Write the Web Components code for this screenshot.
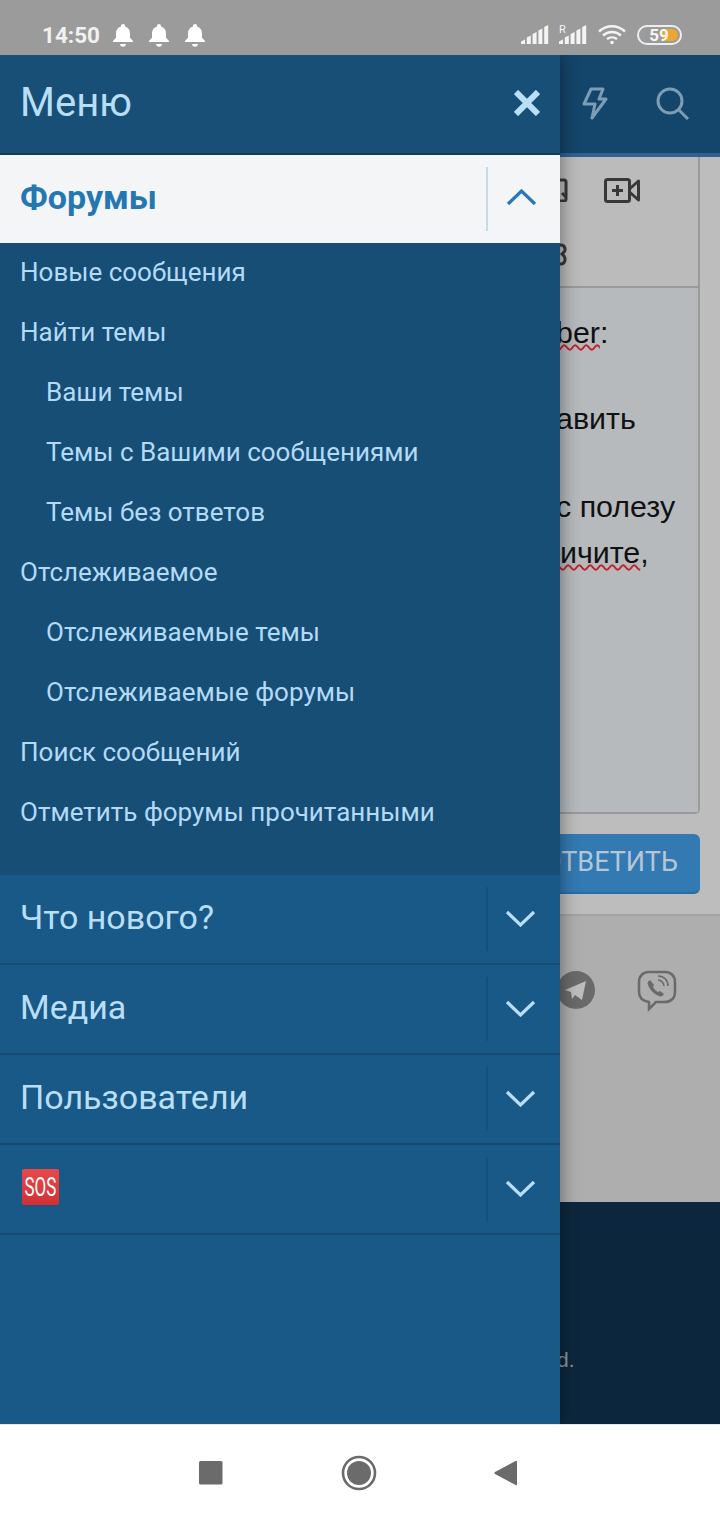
<!DOCTYPE html>
<html lang="ru">
<head>
<meta charset="utf-8">
<title>Меню</title>
<style>
  html, body { margin: 0; height: 100%; }
  body {
    width: 720px;
    height: 1520px;
    overflow: hidden;
    display: flex;
    flex-direction: column;
    font-family: Roboto, "Liberation Sans", sans-serif;
  }
  .stage { position: relative; flex: 1; min-height: 0; overflow: hidden; }
</style>
</head>
<body>
<status-bar></status-bar>
<div class="stage">
  <page-behind></page-behind>
  <app-drawer>
    <drawer-section label="Форумы" open>
      <drawer-link>Новые сообщения</drawer-link>
      <drawer-link>Найти темы</drawer-link>
      <drawer-link sub>Ваши темы</drawer-link>
      <drawer-link sub>Темы с Вашими сообщениями</drawer-link>
      <drawer-link sub>Темы без ответов</drawer-link>
      <drawer-link>Отслеживаемое</drawer-link>
      <drawer-link sub>Отслеживаемые темы</drawer-link>
      <drawer-link sub>Отслеживаемые форумы</drawer-link>
      <drawer-link>Поиск сообщений</drawer-link>
      <drawer-link>Отметить форумы прочитанными</drawer-link>
    </drawer-section>
    <drawer-section label="Что нового?"></drawer-section>
    <drawer-section label="Медиа"></drawer-section>
    <drawer-section label="Пользователи"></drawer-section>
    <drawer-section sos></drawer-section>
  </app-drawer>
</div>
<nav-bar></nav-bar>

<script>
const bell = `<svg width="22" height="24" viewBox="0 0 22 24"><path fill="#fff" d="M11 1c1.200 0 2 .8 2 2v.6c3.300.9 5 3.500 5 7v4.200l3 3.200v1H1v-1l3-3.200v-4.200c0-3.500 1.700-6.100 5-7V3c0-1.200.8-2 2-2z"/><path fill="#fff" d="M8 21h6c0 1.600-1.300 2.700-3 2.700S8 22.600 8 21z"/></svg>`;

const bars = `<path d="M0 19v-2.500l4-2V19zM5.800 19v-6.500l4-2V19zM11.600 19V9l4-2v12zM17.400 19V5.500l4-2V19zM23.200 19V2l4-2v19z" fill="#f4f4f4"/>`;

class StatusBar extends HTMLElement {
  constructor() {
    super();
    this.attachShadow({ mode: "open" });
    this.shadowRoot.innerHTML = `
      <style>
        :host {
          display: flex;
          flex: none;
          height: 55px;
          box-sizing: border-box;
          padding: 14px 38px 0 42px;
          align-items: center;
          background: #9b9b9b;
          color: #f1f1f1;
        }
        .time { font: 700 22.500px Roboto, sans-serif; width: 70px; }
        .bells { display: flex; gap: 14px; }
        .right { margin-left: auto; display: flex; align-items: center; }
        svg { display: block; }
        .sim2 { margin-left: 10px; margin-top: -1px; }
        .wifi { margin-left: 11px; }
        .battery {
          margin-left: 11px;
          width: 45px;
          height: 20px;
          box-sizing: border-box;
          border: 2px solid #eee;
          border-radius: 10px;
          padding: 2px;
          position: relative;
        }
        .fill { height: 100%; margin-left: 21px; background: #efa62e; border-radius: 0 7px 7px 0; }
        .pct {
          position: absolute;
          inset: 0 1px 0 0;
          text-align: center;
          font: 700 17px/16px Roboto, sans-serif;
          color: #f6f6f6;
        }
      </style>
      <div class="time">14:50</div>
      <div class="bells">${bell}${bell}${bell}</div>
      <div class="right">
        <svg width="28" height="19" viewBox="0 0 28 19">${bars}</svg>
        <svg class="sim2" width="28" height="20" viewBox="0 0 28 20">
          <text x="0" y="9" font-family="Roboto" font-size="11" fill="#f4f4f4">R</text>
          <g transform="translate(0 1)">${bars}</g>
        </svg>
        <svg class="wifi" width="28" height="20" viewBox="0 0 28 20" fill="none" stroke="#f4f4f4" stroke-width="2.400">
          <path d="M1 6.500C8.500-.5 19.500-.5 27 6.500"/>
          <path d="M5 10.500c5.300-4.700 12.700-4.700 18 0"/>
          <path d="M9 14.200c3-2.500 7-2.500 10 0"/>
          <circle cx="14" cy="17.500" r="1.800" fill="#f4f4f4" stroke="none"/>
        </svg>
        <div class="battery"><div class="fill"></div><div class="pct">59</div></div>
      </div>
    `;
  }
}
customElements.define("status-bar", StatusBar);

class NavBar extends HTMLElement {
  constructor() {
    super();
    this.attachShadow({ mode: "open" });
    this.shadowRoot.innerHTML = `
      <style>
        :host {
          display: flex;
          flex: none;
          height: 96px;
          box-sizing: border-box;
          border-top: 1px solid #dfe8ef;
          background: #fff;
          padding: 0 202px 0 199px;
          justify-content: space-between;
          align-items: center;
        }
        svg { display: block; }
      </style>
      <svg width="24" height="24" viewBox="0 0 24 24"><rect x="0" y="0" width="23.500" height="23.500" rx="1.500" fill="#6b6b6b"/></svg>
      <svg width="36" height="36" viewBox="0 0 36 36"><circle cx="18" cy="18" r="16" fill="none" stroke="#6b6b6b" stroke-width="2.600"/><circle cx="18" cy="18" r="12" fill="#6b6b6b"/></svg>
      <svg width="24" height="26" viewBox="0 0 24 26"><path d="M23 1.500v23c0 .8-.8 1-1.300.6L1 14c-.8-.5-.8-1.500 0-2L21.700.9c.5-.4 1.300-.2 1.300.6z" fill="#6b6b6b"/></svg>
    `;
  }
}
customElements.define("nav-bar", NavBar);

class AppDrawer extends HTMLElement {
  constructor() {
    super();
    this.attachShadow({ mode: "open" });
    this.shadowRoot.innerHTML = `
      <style>
        :host {
          position: absolute;
          left: 0;
          top: 0;
          bottom: 0;
          width: 560px;
          display: flex;
          flex-direction: column;
          background: #195987;
          box-shadow: 0 0 18px rgba(0, 0, 0, .45);
        }
        header {
          flex: none;
          height: 100px;
          box-sizing: border-box;
          padding: 0 20px 3px;
          display: flex;
          align-items: center;
          justify-content: space-between;
          background: #184f77;
          color: #b9def8;
          font-size: 40px;
          border-bottom: 2px solid #123a59;
        }
        svg { display: block; }
      </style>
      <header>
        <span>Меню</span>
        <svg width="26" height="26" viewBox="0 0 26 26" fill="none" stroke="#b9def8" stroke-width="6"><path d="M2 2l22 22M24 2L2 24"/></svg>
      </header>
      <slot></slot>
    `;
  }
}
customElements.define("app-drawer", AppDrawer);

class DrawerSection extends HTMLElement {
  constructor() {
    super();
    this.attachShadow({ mode: "open" });
    const open = this.hasAttribute("open");
    const title = this.hasAttribute("sos")
      ? `<span class="sos"><span>SOS</span></span>`
      : this.getAttribute("label");
    const chevron = open ? "M2 15L15.500 2 29 15" : "M2 2l13.500 13L29 2";
    this.shadowRoot.innerHTML = `
      <style>
        :host { display: block; flex: none; }
        .row {
          display: flex;
          align-items: center;
          height: 88px;
          padding-left: 20px;
          color: #b9def8;
          font-size: 34px;
          border-bottom: 2px solid #174a72;
        }
        :host([open]) .row {
          background: #f4f5f6;
          color: #2577b1;
          font-weight: 700;
          border-bottom: 0;
        }
        .title { flex: 1; padding-bottom: 5px; }
        .toggle {
          width: 74px;
          height: 64px;
          border-left: 2px solid #174f7b;
          display: flex;
          align-items: center;
          justify-content: center;
          padding-right: 8px;
          box-sizing: border-box;
        }
        .toggle svg { margin-top: -2px; }
        :host([open]) .toggle { border-left-color: #c6d9e7; padding-right: 6px; }
        :host([open]) .toggle svg { margin-top: -3px; }
        .list {
          display: none;
          background: #174e76;
          padding-bottom: 32px;
        }
        :host([open]) .list { display: block; }
        svg { display: block; }
        .sos {
          display: flex;
          align-items: center;
          justify-content: center;
          width: 37px;
          height: 36px;
          margin: 1px 0 0 2px;
          border-radius: 2px;
          background: linear-gradient(#e9494c, #d33034);
          color: #fff;
          font-size: 25px;
          font-weight: 400;
        }
        .sos span { transform: scaleX(.68); }
      </style>
      <div class="row">
        <div class="title">${title}</div>
        <div class="toggle">
          <svg width="31" height="17" viewBox="0 0 31 17" fill="none" stroke="${open ? "#2a78b4" : "#b9def8"}" stroke-width="3.200"><path d="${chevron}"/></svg>
        </div>
      </div>
      <div class="list"><slot></slot></div>
    `;
  }
}
customElements.define("drawer-section", DrawerSection);

class DrawerLink extends HTMLElement {
  constructor() {
    super();
    this.attachShadow({ mode: "open" });
    this.shadowRoot.innerHTML = `
      <style>
        :host {
          display: flex;
          align-items: center;
          height: 60px;
          box-sizing: border-box;
          padding: 0 0 2px 20px;
          color: #b3daf7;
          font-size: 26px;
        }
        :host([sub]) { padding-left: 46px; }
      </style>
      <slot></slot>
    `;
  }
}
customElements.define("drawer-link", DrawerLink);

// dimmed forum page that shows to the right of the drawer
class PageBehind extends HTMLElement {
  constructor() {
    super();
    this.attachShadow({ mode: "open" });
    this.shadowRoot.innerHTML = `
      <style>
        :host {
          position: absolute;
          inset: 0;
          display: flex;
          flex-direction: column;
          background: #bdbdbd;
          font-family: "Liberation Sans", sans-serif;
        }
        .top {
          flex: none;
          height: 102px;
          box-sizing: border-box;
          border-bottom: 4px solid #2f6290;
          padding: 0 31px 2px 582px;
          background: #14456a;
          display: flex;
          align-items: center;
          justify-content: space-between;
        }
        svg { display: block; }
        .editor {
          flex: none;
          margin-right: 20px;
          height: 657px;
          box-sizing: border-box;
          border-right: 2px solid #9a9a9a;
          border-bottom: 2px solid #9a9a9a;
          border-radius: 0 0 5px 0;
          display: flex;
          flex-direction: column;
        }
        .tools {
          flex: none;
          height: 131px;
          box-sizing: border-box;
          border-bottom: 2px solid #9a9a9a;
          position: relative;
          background: #bbb;
        }
        .tools .cam { position: absolute; left: 604px; top: 21px; }
        .tools .img { position: absolute; left: 540px; top: 21px; }
        .tools .lnk { position: absolute; left: 542px; top: 85px; }
        .text {
          flex: 1;
          background: #b6babd;
          color: #111;
          font-size: 30.400px;
          line-height: 46px;
          position: relative;
        }
        .text div { position: absolute; white-space: nowrap; }
        .bad { text-decoration: underline wavy #c4202a 2px; text-underline-offset: 1px; }
        .actions {
          flex: none;
          height: 102px;
          box-sizing: border-box;
          padding: 20px 20px 0 0;
          border-bottom: 2px solid #a3a3a3;
          display: flex;
          justify-content: flex-end;
        }
        .btn {
          width: 230px;
          height: 60px;
          box-sizing: border-box;
          background: #337ab3;
          border-bottom: 2px solid #2b6ca0;
          border-radius: 6px;
          color: #b5c7d6;
          font: 27px/56px Roboto, sans-serif;
          text-align: right;
          padding-right: 22px;
        }
        .share {
          flex: none;
          height: 286px;
          box-sizing: border-box;
          background: #aeaeae;
          padding: 54px 0 0 556px;
          display: flex;
          gap: 41px;
        }
        .foot {
          flex: 1;
          background: #0c273d;
          color: #8f979e;
          font-size: 21px;
          padding: 146px 0 0 557px;
        }
      </style>
      <div class="top">
        <svg width="26" height="33" viewBox="0 0 26 33" fill="none" stroke="#7d9db5" stroke-width="3" stroke-linejoin="round"><path d="M9 2h12l-4 10h7L10 31l3-14H2z"/></svg>
        <svg width="33" height="33" viewBox="0 0 33 33" fill="none" stroke="#7d9db5" stroke-width="3"><circle cx="14" cy="14" r="12"/><path d="M23 23l9 9"/></svg>
      </div>
      <div class="editor">
        <div class="tools">
          <svg class="img" width="28" height="24" viewBox="0 0 28 24" fill="none" stroke="#383838" stroke-width="3"><rect x="2" y="2" width="24" height="21" rx="2"/><path d="M22 15l4 4"/></svg>
          <svg class="cam" width="36" height="25" viewBox="0 0 36 25" fill="none" stroke="#383838" stroke-width="3" stroke-linejoin="round"><rect x="1.500" y="1.500" width="24" height="22" rx="2"/><path d="M25.500 11L34.500 3v19l-9-8"/><path d="M8 12.500h11M13.500 7v11"/></svg>
          <svg class="lnk" width="26" height="24" viewBox="0 0 26 24" fill="none" stroke="#383838" stroke-width="3"><path d="M15 3h4c4 0 5 5 3 7l-2 2 2 2c2 3 1 8-3 8h-4"/></svg>
        </div>
        <div class="text">
          <div style="left:556px;top:21px"><span class="bad">ber</span>:</div>
          <div style="left:556px;top:107px">авить</div>
          <div style="left:556px;top:195px">с полезу</div>
          <div style="left:560px;top:241px"><span class="bad">ичите</span>,</div>
        </div>
      </div>
      <div class="actions"><div class="btn">ОТВЕТИТЬ</div></div>
      <div class="share">
        <svg width="40" height="40" viewBox="0 0 40 40"><circle cx="20" cy="20" r="19" fill="#6a6a6a"/><path d="M9 20l21-9-4 19-7-5-3 4-1-7z" fill="#bdbdbd"/></svg>
        <svg width="40" height="42" viewBox="0 0 40 42" fill="none" stroke="#6a6a6a" stroke-width="2.500"><path d="M12 2h16c6 0 10 4 10 10v10c0 6-4 10-10 10H19l-7 7v-7c-6-1-10-4-10-10V12C2 6 6 2 12 2z"/><path d="M13 10c-2 1-3 3-2 5 2 5 6 9 11 11 2 1 4 0 5-2l-4-3-2 1c-2-1-4-3-5-5l1-2z" fill="#6a6a6a" stroke="none"/><path d="M21 10c3 0 6 3 6 6M21 6c6 0 10 4 10 10" stroke-width="1.500"/></svg>
      </div>
      <div class="foot">d.</div>
    `;
  }
}
customElements.define("page-behind", PageBehind);
</script>
</body>
</html>
